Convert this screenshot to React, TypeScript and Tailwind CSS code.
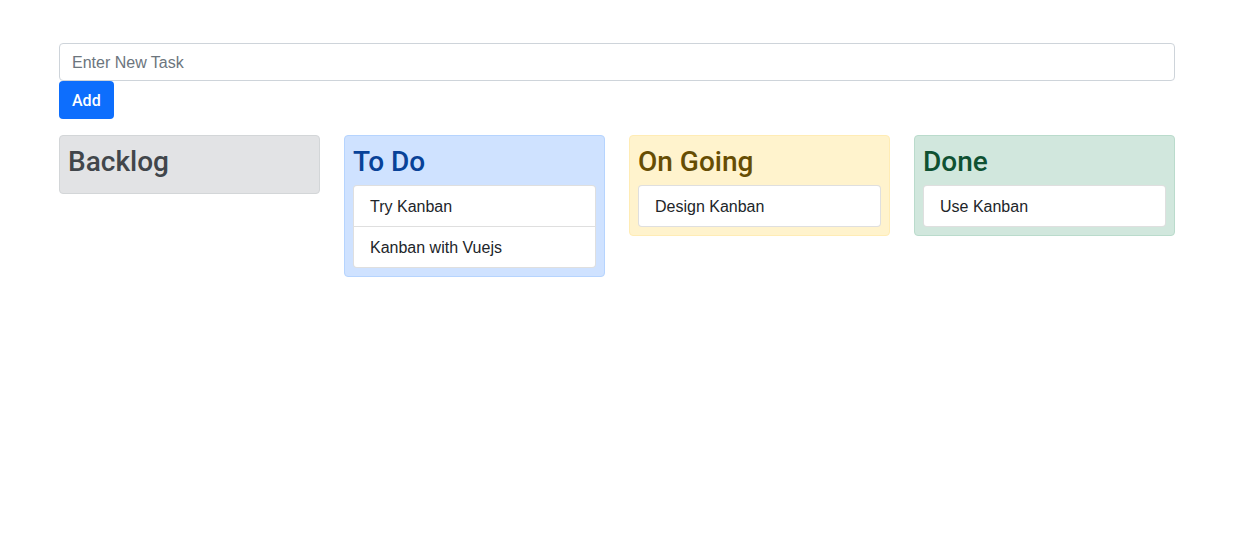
import React from 'react'

interface Column {
  title: string
  box: string
  heading: string
  tasks: string[]
}

const columns: Column[] = [
  { title: 'Backlog', box: 'bg-[#e2e3e5] border-[#d3d6d8]', heading: 'text-[#41464b]', tasks: [] },
  { title: 'To Do', box: 'bg-[#cfe2ff] border-[#b6d4fe]', heading: 'text-[#084298]', tasks: ['Try Kanban', 'Kanban with Vuejs'] },
  { title: 'On Going', box: 'bg-[#fff3cd] border-[#ffecb5]', heading: 'text-[#664d03]', tasks: ['Design Kanban'] },
  { title: 'Done', box: 'bg-[#d1e7dd] border-[#badbcc]', heading: 'text-[#0f5132]', tasks: ['Use Kanban'] },
]

export default function App() {
  return (
    <div className="min-h-[550px] bg-white font-['Liberation_Sans',Arial,sans-serif] text-[#212529]">
      <div className="pl-[59px] pt-[43px] w-[1175px]">
        <input
          type="text"
          placeholder="Enter New Task"
          className="block w-full h-[38px] px-3 pt-[2px] border border-[#ced4da] rounded text-base outline-none placeholder:text-[#6c757d]"
        />
        <button className="h-[38px] px-[13px] pt-[2px] bg-[#0d6efd] text-white rounded text-base font-['Roboto',sans-serif] font-medium">
          Add
        </button>
        <div className="mt-4 grid grid-cols-4 gap-6 items-start">
          {columns.map((col) => (
            <div key={col.title} className={`border rounded p-2 ${col.box}`}>
              <h3 className={`text-[28px] leading-[33px] pt-[1px] mb-[7px] font-['Roboto',sans-serif] font-medium ${col.heading}`}>
                {col.title}
              </h3>
              {col.tasks.length > 0 && (
                <div className="bg-white border border-black/[0.125] rounded">
                  {col.tasks.map((t, i) => (
                    <div
                      key={t}
                      className={`px-4 pt-[9px] pb-[7px] leading-6 text-base ${i > 0 ? 'border-t border-black/[0.125]' : ''}`}
                    >
                      {t}
                    </div>
                  ))}
                </div>
              )}
            </div>
          ))}
        </div>
      </div>
    </div>
  )
}
